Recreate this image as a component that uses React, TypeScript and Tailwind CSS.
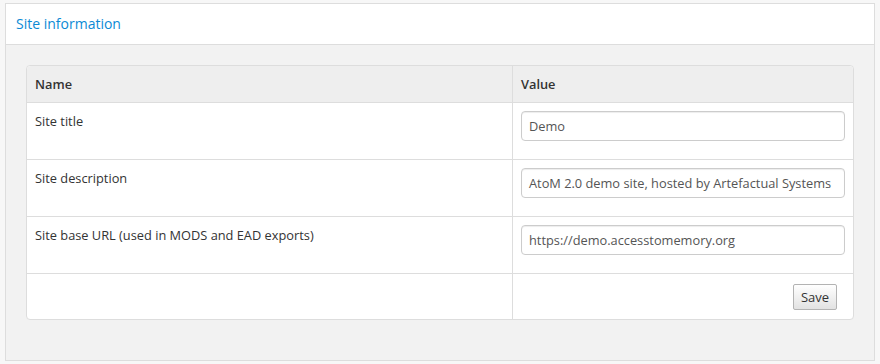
import React from "react";

const rows = [
  { name: "Site title", value: "Demo" },
  { name: "Site description", value: "AtoM 2.0 demo site, hosted by Artefactual Systems" },
  { name: "Site base URL (used in MODS and EAD exports)", value: "https://demo.accesstomemory.org" },
];

export default function App() {
  return (
    <div
      className="w-[880px] h-[364px] bg-[#f7f7f7] pt-[3px] pl-[5px] overflow-hidden text-[#333]"
      style={{ fontFamily: '"Open Sans", "Noto Sans", sans-serif' }}
    >
      <div className="w-[870px] border border-[#dddddd] bg-[#f2f2f2]">
        <div className="h-[41px] bg-white border-b border-[#dddddd] flex items-center pl-[10px]">
          <span className="text-[14px] text-[#0b8ad5] leading-[20px]">Site information</span>
        </div>
        <div className="pt-[20px] px-[20px] pb-[40px]">
          <table className="w-[828px] border-separate border-spacing-0 border border-[#dddddd] rounded-[4px] bg-white text-[12.8px] leading-[20px]">
            <thead>
              <tr>
                <th className="w-[486px] bg-[#eeeeee] text-left font-semibold px-[8px] py-[8px] h-[36px] rounded-tl-[4px]">
                  Name
                </th>
                <th className="bg-[#eeeeee] text-left font-semibold px-[8px] py-[8px] border-l border-[#dddddd] rounded-tr-[4px]">
                  Value
                </th>
              </tr>
            </thead>
            <tbody>
              {rows.map((r) => (
                <tr key={r.name}>
                  <td className="align-top px-[8px] pt-[8px] pb-[8px] border-t border-[#dddddd]">{r.name}</td>
                  <td className="align-top px-[8px] pt-[8px] pb-[8px] border-t border-l border-[#dddddd]">
                    <div className="h-[30px] w-[324px] mb-[10px] border border-[#cccccc] rounded-[4px] px-[7px] flex items-center text-[12.8px] text-[#555] whitespace-nowrap overflow-hidden shadow-[inset_0_1px_1px_rgba(0,0,0,0.075)]">
                      {r.value}
                    </div>
                  </td>
                </tr>
              ))}
              <tr>
                <td className="h-[46px] border-t border-[#dddddd]"></td>
                <td className="border-t border-l border-[#dddddd] px-[8px] py-[8px]">
                  <div className="flex justify-end pr-[8px]">
                    <button className="h-[26px] w-[44px] border border-[#b3b3b3] rounded-[2px] bg-gradient-to-b from-white to-[#e2e2e2] text-[13px] text-[#333] leading-[20px] flex items-center justify-center">
                      Save
                    </button>
                  </div>
                </td>
              </tr>
            </tbody>
          </table>
        </div>
      </div>
    </div>
  );
}
